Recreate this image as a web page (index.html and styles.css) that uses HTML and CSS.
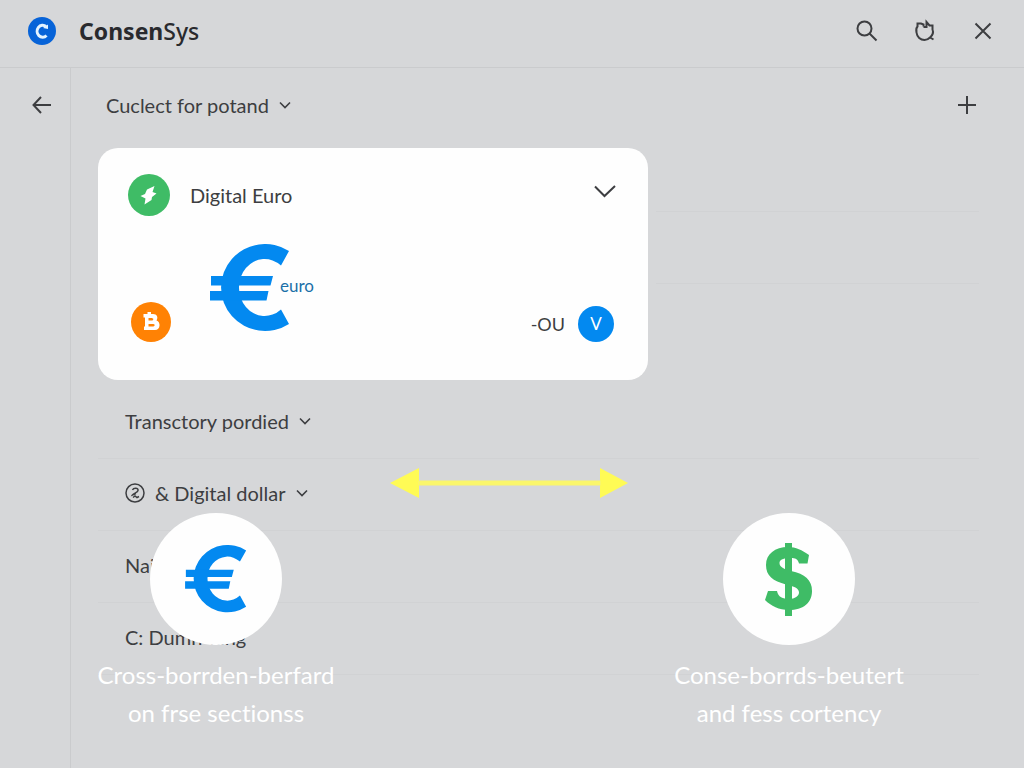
FILE: index.html
```html
<!DOCTYPE html>
<html lang="en">
<head>
<meta charset="utf-8">
<meta name="viewport" content="width=device-width, initial-scale=1">
<title>ConsenSys</title>
<link rel="stylesheet" href="styles.css">
</head>
<body>
<svg class="defs" aria-hidden="true">
  <symbol id="chevron" viewBox="0 0 12 8"><path d="M1 1.500 6 6.500 11 1.500" fill="none" stroke="currentColor" stroke-width="1.600"/></symbol>
  <symbol id="euro-mark" viewBox="0 0 80 88">
    <path fill="currentColor" d="M79 7A44 43.500 0 1 0 79 80L71 65.500A25.700 28.500 0 1 1 71 21.500Z"/>
    <path fill="currentColor" d="M1 32H63L60.500 41.500H1ZM0 47H58.500L56.500 56.500H0Z"/>
  </symbol>
</svg>

<header class="topbar">
  <a class="brand" href="#">
    <svg class="brand-logo" viewBox="0 0 28 28" aria-hidden="true">
      <circle cx="14" cy="14" r="14" fill="#0763d8"/>
      <path d="M18 9.500A5.500 6 0 1 0 18.500 18.500" fill="none" stroke="#e4f3ff" stroke-width="3"/>
      <path d="M15 11 20 7.500V12Z" fill="#e4f3ff"/>
    </svg>
    <span class="brand-name">Consen<span class="brand-tail">Sys</span></span>
  </a>
  <div class="actions">
    <button class="icon-button" aria-label="Search">
      <svg class="icon" viewBox="0 0 24 24"><circle cx="9.500" cy="9.500" r="7" /><path d="M14.500 14.500 21.500 21.500"/></svg>
    </button>
    <button class="icon-button" aria-label="Refresh">
      <svg class="icon" viewBox="0 0 24 24"><path d="M10.500 7.500V5.500L8 4.500H4.500V7.500C3 9 3 11 3.500 13.500 4 18 7.500 21 11.500 21 14 21 15.500 20 17 18.500L20.500 20.500M17 18.500C20 16 20.500 13 19.500 10.500V6.500H16.500L13.500 3V8L10.500 8"/></svg>
    </button>
    <button class="icon-button" aria-label="Close">
      <svg class="icon" viewBox="0 0 24 24"><path d="M4.500 4.500 19.500 19.500M19.500 4.500 4.500 19.500"/></svg>
    </button>
  </div>
</header>

<div class="shell">
  <nav class="rail" aria-label="Navigation">
    <button class="icon-button" aria-label="Back">
      <svg class="icon" viewBox="0 0 24 24"><path d="M21 12H3.500M11 4 3.500 12 11 20"/></svg>
    </button>
  </nav>

  <main class="content">
    <div class="toolbar">
      <button class="picker">Cuclect for potand <svg class="chevron"><use href="#chevron"/></svg></button>
      <button class="icon-button" aria-label="Add">
        <svg class="icon" viewBox="0 0 24 24"><path d="M12 3V21M3 12H21"/></svg>
      </button>
    </div>

    <div class="feature">
      <section class="card">
        <div class="card-row">
          <svg class="coin coin-large" viewBox="0 0 42 42" aria-hidden="true">
            <circle cx="21" cy="21" r="21" fill="#3fbc66"/>
            <path d="M26.500 12 19 15.500 17 20 12.500 22 17.500 24.500 16.500 30.500 23.500 26 24 23 28.500 19.500 24.500 18Z" fill="#fff"/>
          </svg>
          <h1 class="card-title">Digital Euro</h1>
          <button class="icon-button push" aria-label="Collapse">
            <svg class="icon" viewBox="0 0 24 24"><path d="M1 3.500 10.500 13 21 3"/></svg>
          </button>
        </div>
        <div class="card-body">
          <svg class="coin" viewBox="0 0 40 40" aria-hidden="true">
            <circle cx="20" cy="20" r="20" fill="#ff8204"/>
            <path fill="#fff" fill-rule="evenodd" d="M12.500 12H16.500V10H20V12H22C26 12 27.500 15 25.500 18.500 30 20 29.500 28 24 28H13V24.500H14V15.500H12.500ZM17.500 16V18.500H21.500L22.500 17 21 16ZM17.500 22V24.500H22.500L24 23 22.500 22Z"/>
          </svg>
          <div class="euro">
            <svg class="euro-large" aria-hidden="true"><use href="#euro-mark"/></svg>
            <span class="euro-label">euro</span>
          </div>
          <div class="account push">
            <span>-OU</span>
            <span class="avatar">V</span>
          </div>
        </div>
      </section>
      <div class="ruled"></div>
    </div>

    <ul class="list">
      <li class="list-row"><button class="picker">Transctory pordied <svg class="chevron"><use href="#chevron"/></svg></button></li>
      <li class="list-row"><button class="picker">
        <svg class="badge" viewBox="0 0 20 20" aria-hidden="true"><circle cx="10" cy="10" r="9"/><path d="M7.500 7C8.500 4.500 13.500 4.500 13 7.500 12.500 10 9 9.500 7.500 12L11 10.500M8 14.500 10 13 12 14.500 14 13.500"/></svg>
        &amp; Digital dollar <svg class="chevron"><use href="#chevron"/></svg></button></li>
      <li class="list-row">Naitl</li>
      <li class="list-row">C: Dumn-king</li>
    </ul>

    <div class="transfer">
      <figure class="party">
        <div class="disc"><svg class="euro-small" role="img" aria-label="Euro"><use href="#euro-mark"/></svg></div>
        <figcaption>Cross-borrden-berfard<br>on frse sectionss</figcaption>
      </figure>
      <svg class="arrow" viewBox="0 0 238 32" aria-hidden="true">
        <path d="M0 16 29 1V31ZM238 16 210 1V31Z" fill="#fffb55"/><path d="M28 16H211" stroke="#faf66b" stroke-width="5"/>
      </svg>
      <figure class="party">
        <div class="disc">
          <svg class="dollar" viewBox="0 0 48 73" role="img" aria-label="Dollar"><path fill="currentColor" d="M44 12 42.500 20.500H34C33 16 30 15 26 15 18 14.500 14.500 17 14.500 20 14.500 24 19 26 26 28 40 31 47 37 47 48 47 60 38 67 24 67 14 67 6 63 0 57L3 48H12C13 54 18 56 24 56 30 56 34 53 34 49.500 34 45 29 43.500 21 41.500 8 38 1 33 1 22 1 11 10 4 23 4 31 4 37 7 44 12Z"/><path fill="currentColor" d="M20 0H27V73H20Z"/></svg>
        </div>
        <figcaption>Conse-borrds-beutert<br>and fess cortency</figcaption>
      </figure>
    </div>
  </main>
</div>
</body>
</html>
```
FILE: styles.css
```css
* { box-sizing: border-box; }

body {
  margin: 0;
  min-height: 100vh;
  display: flex;
  flex-direction: column;
  background: #d6d7d9;
  color: #3d3e41;
  font: 20px/24px Lato, "Open Sans", sans-serif;
  font-variant-ligatures: none;
}

button {
  padding: 0;
  border: 0;
  background: none;
  color: inherit;
  font: inherit;
  cursor: pointer;
}

.defs { display: none; }

.topbar {
  display: flex;
  align-items: center;
  justify-content: space-between;
  height: 68px;
  padding: 0 29px 6px 28px;
  border-bottom: 1px solid #cacbcd;
}

.brand {
  display: flex;
  align-items: center;
  gap: 23px;
  color: #292a2e;
  text-decoration: none;
}

.brand-logo { width: 28px; height: 28px; }
.brand-name { font: 700 23px/28px "Noto Sans", sans-serif; }
.brand-tail { font-weight: 500; }

.actions { display: flex; gap: 34px; }

.icon-button {
  display: flex;
  align-items: center;
  justify-content: center;
  width: 24px;
  height: 24px;
}

.icon {
  width: 24px;
  height: 24px;
  fill: none;
  stroke: currentColor;
  stroke-width: 2;
}

.push { margin-left: auto; }

.shell {
  flex: 1;
  display: grid;
  grid-template-columns: 71px 1fr;
}

.rail {
  display: flex;
  justify-content: flex-end;
  align-items: flex-start;
  padding: 25px 16px;
  border-right: 1px solid #cacbcd;
}

.content {
  position: relative;
  padding: 0 45px 0 27px;
}

.toolbar {
  display: flex;
  align-items: center;
  justify-content: space-between;
  height: 74px;
  padding-left: 8px;
}

.picker {
  display: flex;
  align-items: center;
  gap: 10px;
  white-space: nowrap;
}

.chevron { width: 12px; height: 8px; }

.feature {
  display: grid;
  grid-template-columns: minmax(0, 550fr) minmax(0, 331fr);
  padding-top: 6px;
}

.ruled {
  margin-left: 8px;
  background: linear-gradient(#d1d2d4, #d1d2d4) 0 63px / 100% 1px no-repeat,
              linear-gradient(#d1d2d4, #d1d2d4) 0 135px / 100% 1px no-repeat;
}

.card {
  padding: 26px 30px 38px;
  border-radius: 20px;
  background: #fefefe;
}

.card-row {
  display: flex;
  align-items: center;
  gap: 20px;
}

.card-title { margin: 0; font: inherit; }
.coin { width: 40px; height: 40px; margin-left: 3px; }
.coin-large { width: 42px; height: 42px; margin-left: 0; }

.card-body {
  display: flex;
  align-items: flex-end;
  padding-top: 28px;
  padding-right: 4px;
}

.euro {
  display: flex;
  align-items: center;
  margin-left: 39px;
  padding-bottom: 10px;
  color: #0389f0;
}

.euro-large { width: 80px; height: 88px; }
.euro-label { margin-left: -10px; padding-bottom: 4px; color: #1b70a8; font-size: 17px; }

.account {
  display: flex;
  align-items: center;
  gap: 13px;
  font-size: 18px;
}

.avatar {
  display: grid;
  place-items: center;
  width: 36px;
  height: 36px;
  border-radius: 50%;
  background: #0389f0;
  color: #fff;
  font-size: 17px;
}

.list {
  margin: 0;
  padding: 7px 0 0;
  list-style: none;
}

.list-row {
  display: flex;
  align-items: center;
  height: 72px;
  padding: 0 0 4px 27px;
  border-bottom: 1px solid #d1d2d4;
}

.badge {
  width: 20px;
  height: 20px;
  fill: none;
  stroke: currentColor;
  stroke-width: 1.5;
}

.transfer {
  position: absolute;
  top: 399px;
  left: 20px;
  right: 110px;
  display: grid;
  grid-template-columns: 250px 1fr 250px;
  justify-items: center;
  align-items: start;
  column-gap: 12px;
}

.arrow {
  width: 238px;
  height: 32px;
  justify-self: end;
  margin-right: 24px;
}

.party {
  display: flex;
  flex-direction: column;
  align-items: center;
  gap: 11px;
  margin: 0;
  padding-top: 46px;
  color: #fff;
  font-size: 24px;
  line-height: 38px;
  text-align: center;
  white-space: nowrap;
}

.disc {
  display: grid;
  place-items: center;
  width: 132px;
  height: 132px;
  border-radius: 50%;
  background: #fefefe;
}

.euro-small { width: 62px; height: 68px; color: #0389f0; }
.dollar { width: 48px; height: 73px; color: #3fbc66; }
```
